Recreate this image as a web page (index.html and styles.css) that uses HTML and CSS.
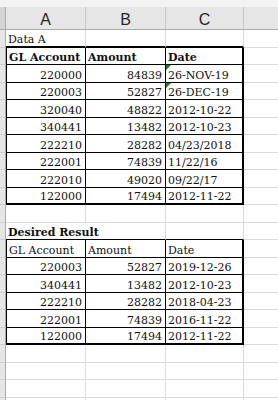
FILE: index.html
```html
<!DOCTYPE html>
<html>
<head>
<meta charset="utf-8">
<link rel="stylesheet" href="styles.css">
</head>
<body>
<div class="topband"></div>
<div class="sheet">
  <div class="corner"></div><div class="ch">A</div><div class="ch">B</div><div class="ch">C</div><div class="ch chd"></div>

  <div class="rh"></div><div class="c tt">Data A</div><div class="c tt"></div><div class="c tt"></div><div class="c"></div>

  <div class="rh"></div><div class="c t tl b">GL Account</div><div class="c t b">Amount</div><div class="c t tr b">Date</div><div class="c"></div>

  <div class="rh"></div><div class="c t tl n">220000</div><div class="c t n">84839</div><div class="c t tr flag">26-NOV-19</div><div class="c"></div>
  <div class="rh"></div><div class="c t tl n">220003</div><div class="c t n">52827</div><div class="c t tr flag">26-DEC-19</div><div class="c"></div>
  <div class="rh"></div><div class="c t tl n">320040</div><div class="c t n">48822</div><div class="c t tr">2012-10-22</div><div class="c"></div>
  <div class="rh"></div><div class="c t tl n">340441</div><div class="c t n">13482</div><div class="c t tr">2012-10-23</div><div class="c"></div>
  <div class="rh"></div><div class="c t tl n">222210</div><div class="c t n">28282</div><div class="c t tr">04/23/2018</div><div class="c"></div>
  <div class="rh"></div><div class="c t tl n">222001</div><div class="c t n">74839</div><div class="c t tr">11/22/16</div><div class="c"></div>
  <div class="rh"></div><div class="c t tl n">222010</div><div class="c t n">49020</div><div class="c t tr">09/22/17</div><div class="c"></div>
  <div class="rh"></div><div class="c t tl tb n">122000</div><div class="c t tb n">17494</div><div class="c t tr tb">2012-11-22</div><div class="c"></div>

  <div class="rh"></div><div class="c"></div><div class="c"></div><div class="c"></div><div class="c"></div>

  <div class="rh"></div><div class="c t1 b over">Desired Result</div><div class="c t1"></div><div class="c t1"></div><div class="c"></div>

  <div class="rh"></div><div class="c t tl">GL Account</div><div class="c t">Amount</div><div class="c t tr">Date</div><div class="c"></div>

  <div class="rh"></div><div class="c t tl n">220003</div><div class="c t n">52827</div><div class="c t tr">2019-12-26</div><div class="c"></div>
  <div class="rh"></div><div class="c t tl n">340441</div><div class="c t n">13482</div><div class="c t tr">2012-10-23</div><div class="c"></div>
  <div class="rh"></div><div class="c t tl n">222210</div><div class="c t n">28282</div><div class="c t tr">2018-04-23</div><div class="c"></div>
  <div class="rh"></div><div class="c t tl n">222001</div><div class="c t n">74839</div><div class="c t tr">2016-11-22</div><div class="c"></div>
  <div class="rh"></div><div class="c t tl tb n">122000</div><div class="c t tb n">17494</div><div class="c t tr tb">2012-11-22</div><div class="c"></div>

  <div class="rh"></div><div class="c"></div><div class="c"></div><div class="c"></div><div class="c"></div>
  <div class="rh"></div><div class="c"></div><div class="c"></div><div class="c"></div><div class="c"></div>
  <div class="rh"></div><div class="c"></div><div class="c"></div><div class="c"></div><div class="c"></div>
  <div class="rh"></div><div class="c"></div><div class="c"></div><div class="c"></div><div class="c"></div>
</div>
</body>
</html>
```

FILE: styles.css
```css
* { box-sizing: border-box; }
html, body { margin: 0; padding: 0; background: #ffffff; }
body { width: 278px; height: 400px; overflow: hidden; }

.topband { height: 7px; background: #f3f3f3; }

.sheet {
  display: grid;
  grid-template-columns: 6px 80px 80px 78px 40px;
  grid-template-rows: 23px repeat(11, 18px 17px);
  font-family: "DejaVu Serif", "Liberation Serif", serif;
  font-size: 11px;
  color: #111;
}

.corner {
  background: #d4d4d4;
  border-right: 1px solid #ababab;
  border-bottom: 1px solid #ababab;
}
.ch {
  background: #e6e6e6;
  border-right: 1px solid #c6c6c6;
  border-bottom: 1px solid #ababab;
  display: flex;
  align-items: flex-end;
  justify-content: center;
  font-family: "Liberation Sans", Arial, sans-serif;
  font-size: 16px;
  line-height: 18px;
  color: #262626;
  padding-bottom: 0;
}
.chd { border-right: none; }

.rh {
  background: #e6e6e6;
  border-right: 1px solid #ababab;
  border-bottom: 1px solid #cfcfcf;
}

.c {
  border-right: 1px solid #dadada;
  border-bottom: 1px solid #dadada;
  display: flex;
  align-items: flex-end;
  padding: 0 2px 0 2px;
  white-space: nowrap;
  line-height: 13px;
  position: relative;
}
.n { justify-content: flex-end; padding-right: 3px; }
.b { font-weight: bold; }

.t { border-right: 1px solid #000; border-bottom: 1px solid #000; }
.tl { border-left: 1px solid #000; }
.tr { border-right: 2px solid #000; }
.tb { border-bottom: 2px solid #000; }
.tt { border-bottom: 2px solid #000; }
.t1 { border-bottom: 1px solid #000; }
.over { border-right: none; overflow: visible; }

.flag::before {
  content: "";
  position: absolute;
  top: 0;
  left: 0;
  border-top: 5px solid #1f7a1f;
  border-right: 5px solid transparent;
}
```
